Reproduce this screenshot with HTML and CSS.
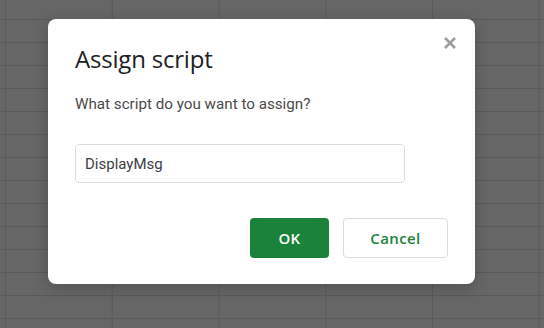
FILE: index.html
```html
<!DOCTYPE html>
<html lang="en">
<head>
  <meta charset="UTF-8">
  <title>Assign script</title>
  <link rel="stylesheet" href="styles.css">
</head>
<body>

  <!-- ダイアログ -->
  <div class="dialog" role="dialog">
    <button class="close-button" aria-label="Close">
      <svg width="12" height="12" viewBox="0 0 12 12">
        <path d="M1 1 L11 11 M11 1 L1 11" stroke="#9e9e9e" stroke-width="2.6" />
      </svg>
    </button>

    <h1 class="title">Assign script</h1>
    <p class="prompt">What script do you want to assign?</p>

    <input class="script-input" type="text" value="DisplayMsg">

    <div class="actions">
      <button class="btn btn-ok">OK</button>
      <button class="btn btn-cancel">Cancel</button>
    </div>
  </div>

</body>
</html>
```

FILE: styles.css
```css
* {
  margin: 0;
  padding: 0;
  box-sizing: border-box;
}

html, body {
  height: 100%;
}

body {
  font-family: Roboto, 'Liberation Sans', sans-serif;
  background-color: #666666;
  background-image:
    linear-gradient(to right, #5a5a5a 1px, transparent 1px),
    linear-gradient(to bottom, #5a5a5a 1px, transparent 1px);
  background-size: 106.75px 23px;
  background-position: 5px 19px;
  padding: 19px 0 0 48px;
  overflow: hidden;
}

.dialog {
  position: relative;
  width: 427px;
  background: #fff;
  border-radius: 8px;
  padding: 26px 27px 26px;
  box-shadow: 0 4px 16px rgba(0,0,0,0.2);
}

.close-button {
  position: absolute;
  top: 18px;
  right: 19px;
  width: 12px;
  height: 12px;
  border: none;
  background: none;
  display: flex;
  cursor: pointer;
}

.title {
  font-family: 'Open Sans', sans-serif;
  font-size: 24px;
  font-weight: 400;
  line-height: 28px;
  color: #202124;
  letter-spacing: -0.2px;
}

.prompt {
  margin-top: 21px;
  font-size: 15.2px;
  line-height: 20px;
  color: #4a4a4a;
}

.script-input {
  display: block;
  margin-top: 30px;
  width: 330px;
  height: 39px;
  padding: 0 9px;
  border: 1px solid #dadce0;
  border-radius: 4px;
  font-family: Roboto, sans-serif;
  font-size: 15px;
  color: #3c4043;
  outline: none;
}

.actions {
  display: flex;
  justify-content: flex-end;
  gap: 14px;
  margin-top: 35px;
}

.btn {
  height: 40px;
  border-radius: 4px;
  font-family: 'Open Sans', sans-serif;
  font-size: 15px;
  font-weight: 600;
  letter-spacing: 0.4px;
  cursor: pointer;
}

.btn-ok {
  width: 79px;
  background: #1b823b;
  border: none;
  color: #fff;
}

.btn-cancel {
  width: 105px;
  background: #fff;
  border: 1px solid #dadce0;
  color: #1b823b;
}
```
